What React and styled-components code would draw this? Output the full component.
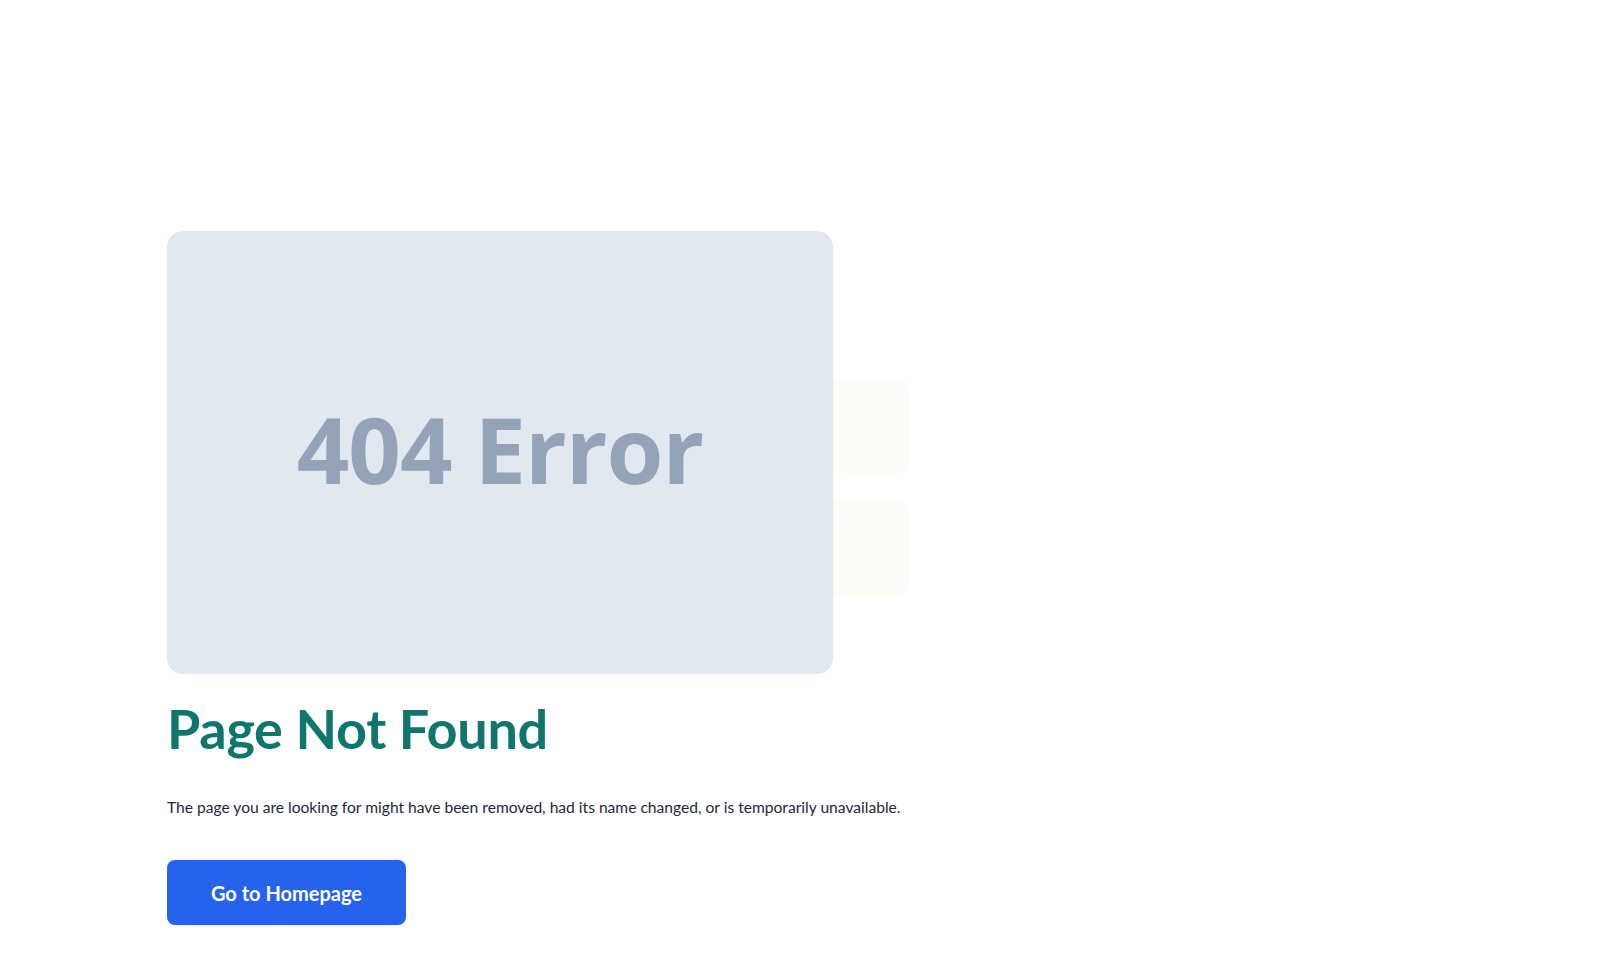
import React from 'react';
import styled, { createGlobalStyle } from 'styled-components';

const GlobalStyle = createGlobalStyle`
  html, body {
    margin: 0;
    padding: 0;
    background: #ffffff;
  }
  body {
    font-family: Lato, "Noto Sans", Arial, sans-serif;
    color: #1e293b;
  }
`;

const Page = styled.main`
  min-height: 978px;
  box-sizing: border-box;
  padding: 231px 0 0 167px;
`;

const Hero = styled.section`
  display: flex;
  flex-direction: column;
  align-items: flex-start;
  width: 760px;
`;

const Visual = styled.div`
  position: relative;
  width: 666px;
  height: 443px;
`;

// Faint cards peeking out from behind the picture
const Ghost = styled.div`
  position: absolute;
  left: 500px;
  top: ${(p) => p.$top}px;
  width: 243px;
  height: 97px;
  border-radius: 18px;
  background: #fdfcf7;
`;

const Picture = styled.div`
  position: relative;
  width: 100%;
  height: 100%;
  border-radius: 16px;
  background: #e2e8f0;
  display: flex;
  align-items: center;
  justify-content: center;

  span {
    font-family: "Open Sans", Arial, sans-serif;
    font-weight: 700;
    font-size: 92px;
    line-height: 1;
    color: #94a3b8;
    letter-spacing: -1px;
    margin-top: -8px;
  }
`;

const Title = styled.h1`
  margin: 24px 0 0;
  font-family: Lato, "Noto Sans", sans-serif;
  font-weight: 700;
  font-size: 54px;
  line-height: 62px;
  color: #0f766e;
  letter-spacing: -0.3px;
`;

const Lead = styled.p`
  margin: 35px 0 0;
  font-size: 15.6px;
  line-height: 24px;
  color: #1e293b;
`;

const HomeButton = styled.a`
  margin-top: 41px;
  display: inline-flex;
  align-items: center;
  justify-content: center;
  width: 239px;
  height: 65px;
  box-sizing: border-box;
  border-radius: 8px;
  background: #2563eb;
  color: #ffffff;
  font-size: 20px;
  font-weight: 700;
  text-decoration: none;
  cursor: pointer;
`;

const App = () => {
  return (
    <>
      <GlobalStyle />
      <Page>
        <Hero>
          <Visual>
            <Ghost $top={147} />
            <Ghost $top={269} />
            <Picture>
              <span>404 Error</span>
            </Picture>
          </Visual>
          <Title>Page Not Found</Title>
          <Lead>
            The page you are looking for might have been removed, had its name changed, or is temporarily unavailable.
          </Lead>
          <HomeButton href="#">Go to Homepage</HomeButton>
        </Hero>
      </Page>
    </>
  );
};

export default App;
